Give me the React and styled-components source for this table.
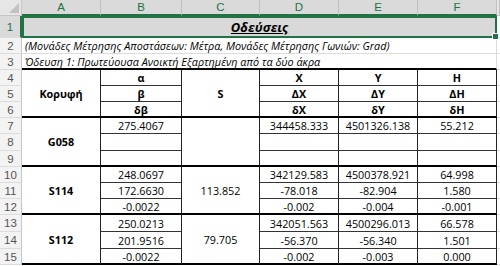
import styled, { createGlobalStyle } from 'styled-components';

const GlobalStyle = createGlobalStyle`
  html, body {
    margin: 0;
    padding: 0;
    background: #fff;
  }
  body {
    font-family: "Open Sans", "Liberation Sans", sans-serif;
    color: #000;
  }
`;

const Sheet = styled.div`
  display: grid;
  width: 500px;
  height: 266px;
  overflow: hidden;
  grid-template-columns: 22px 79px 81px 78px 79px 79px 79px 1fr;
  grid-template-rows: 16px 22px 16px 16px 16px 16px 16px 16px 17px 16px 16px 16px 16px 17px 17px 16px 1fr;
`;

const Corner = styled.div`
  background: #e6e6e6;
  border-right: 1px solid #c6c6c6;
  border-bottom: 1px solid #c6c6c6;
  position: relative;
  &::after {
    content: '';
    position: absolute;
    right: 2px;
    bottom: 2px;
    border-left: 10px solid transparent;
    border-bottom: 10px solid #c2c2c2;
  }
`;

const ColHead = styled.div`
  display: flex;
  align-items: center;
  justify-content: center;
  font-family: "Liberation Sans", sans-serif;
  font-size: 11.5px;
  color: ${(p) => (p.$active ? '#217346' : '#444')};
  background: ${(p) => (p.$active ? '#dadada' : '#e6e6e6')};
  border-right: 1px solid #c0c0c0;
  border-bottom: ${(p) => (p.$active ? '2px solid #217346' : '1px solid #c6c6c6')};
  box-sizing: border-box;
`;

const RowHead = styled.div`
  display: flex;
  align-items: center;
  justify-content: center;
  font-family: "Liberation Sans", sans-serif;
  font-size: 11.5px;
  color: ${(p) => (p.$active ? '#217346' : '#555')};
  background: ${(p) => (p.$active ? '#dadada' : '#f3f3f3')};
  border-right: ${(p) => (p.$active ? '2px solid #217346' : '1px solid #c6c6c6')};
  border-bottom: 1px solid #dcdcdc;
  box-sizing: border-box;
`;

const TitleCell = styled.div`
  grid-column: 2 / 8;
  display: flex;
  align-items: center;
  justify-content: center;
  background: #d9d9d9;
  border: 2px solid #217346;
  box-sizing: border-box;
  font-family: "Open Sans", sans-serif;
  font-size: 13px;
  font-weight: 700;
  font-style: italic;
  text-decoration: underline;
  position: relative;
`;

const Handle = styled.span`
  position: absolute;
  right: -4px;
  bottom: -4px;
  width: 5px;
  height: 5px;
  background: #217346;
  border: 1px solid #fff;
`;

const NoteCell = styled.div`
  grid-column: 2 / 8;
  display: flex;
  align-items: center;
  padding-left: 3px;
  font-size: 10.8px;
  font-style: italic;
  white-space: nowrap;
  border-bottom: ${(p) => (p.$thick ? '2px solid #000' : '1px solid #dcdcdc')};
  border-right: 1px solid #dcdcdc;
  box-sizing: border-box;
`;

const Blank = styled.div`
  border-bottom: 1px solid #dcdcdc;
  box-sizing: border-box;
`;

const Cell = styled.div`
  grid-column: ${(p) => p.$col};
  grid-row: ${(p) => p.$row} / span ${(p) => p.$span || 1};
  display: flex;
  align-items: center;
  justify-content: center;
  font-size: 10.8px;
  font-weight: ${(p) => (p.$bold ? 700 : 400)};
  white-space: nowrap;
  border-right: 1px solid #222;
  border-bottom: ${(p) => (p.$thick ? '2px solid #000' : '1px solid #333')};
  box-sizing: border-box;
`;

const cols = ['A', 'B', 'C', 'D', 'E', 'F'];

// each block: three sheet rows; A and C merged, B/D/E/F one value per row
const blocks = [
  {
    a: 'Κορυφή',
    c: 'S',
    head: true,
    b: ['α', 'β', 'δβ'],
    d: ['X', 'ΔX', 'δX'],
    e: ['Y', 'ΔY', 'δY'],
    f: ['H', 'ΔH', 'δH'],
  },
  {
    a: 'G058',
    c: '',
    b: ['275.4067', '', ''],
    d: ['344458.333', '', ''],
    e: ['4501326.138', '', ''],
    f: ['55.212', '', ''],
  },
  {
    a: 'S114',
    c: '113.852',
    b: ['248.0697', '172.6630', '-0.0022'],
    d: ['342129.583', '-78.018', '-0.002'],
    e: ['4500378.921', '-82.904', '-0.004'],
    f: ['64.998', '1.580', '-0.001'],
  },
  {
    a: 'S112',
    c: '79.705',
    b: ['250.0213', '201.9516', '-0.0022'],
    d: ['342051.563', '-56.370', '-0.002'],
    e: ['4500296.013', '-56.340', '-0.003'],
    f: ['66.578', '1.501', '0.000'],
  },
];

const App = () => {
  return (
    <>
      <GlobalStyle />
      <Sheet>
        <Corner />
        {cols.map((c) => (
          <ColHead key={c} $active>
            {c}
          </ColHead>
        ))}
        <ColHead />

        <RowHead $active>1</RowHead>
        <TitleCell>
          Οδεύσεις
          <Handle />
        </TitleCell>
        <Blank />

        <RowHead>2</RowHead>
        <NoteCell>
          (Μονάδες Μέτρησης Αποστάσεων: Μέτρα, Μονάδες Μέτρησης Γωνιών: Grad)
        </NoteCell>
        <Blank />

        <RowHead>3</RowHead>
        <NoteCell $thick>
          Όδευση 1: Πρωτεύουσα Ανοικτή Εξαρτημένη από τα δύο άκρα
        </NoteCell>
        <Blank />

        {blocks.map((blk, i) => {
          const top = 5 + i * 3;
          return [0, 1, 2].map((k) => {
            const row = top + k;
            const last = k === 2;
            return [
              <RowHead key={`h${row}`} style={{ gridRow: row }}>
                {row - 1}
              </RowHead>,
              k === 0 && (
                <Cell key={`a${row}`} $col={2} $row={row} $span={3} $bold $thick>
                  {blk.a}
                </Cell>
              ),
              <Cell key={`b${row}`} $col={3} $row={row} $bold={blk.head} $thick={last}>
                {blk.b[k]}
              </Cell>,
              k === 0 && (
                <Cell key={`c${row}`} $col={4} $row={row} $span={3} $bold={blk.head} $thick>
                  {blk.c}
                </Cell>
              ),
              <Cell key={`d${row}`} $col={5} $row={row} $bold={blk.head} $thick={last}>
                {blk.d[k]}
              </Cell>,
              <Cell key={`e${row}`} $col={6} $row={row} $bold={blk.head} $thick={last}>
                {blk.e[k]}
              </Cell>,
              <Cell key={`f${row}`} $col={7} $row={row} $bold={blk.head} $thick={last}>
                {blk.f[k]}
              </Cell>,
              <Blank key={`g${row}`} style={{ gridRow: row, gridColumn: 8 }} />,
            ];
          });
        })}
      </Sheet>
    </>
  );
};

export default App;
